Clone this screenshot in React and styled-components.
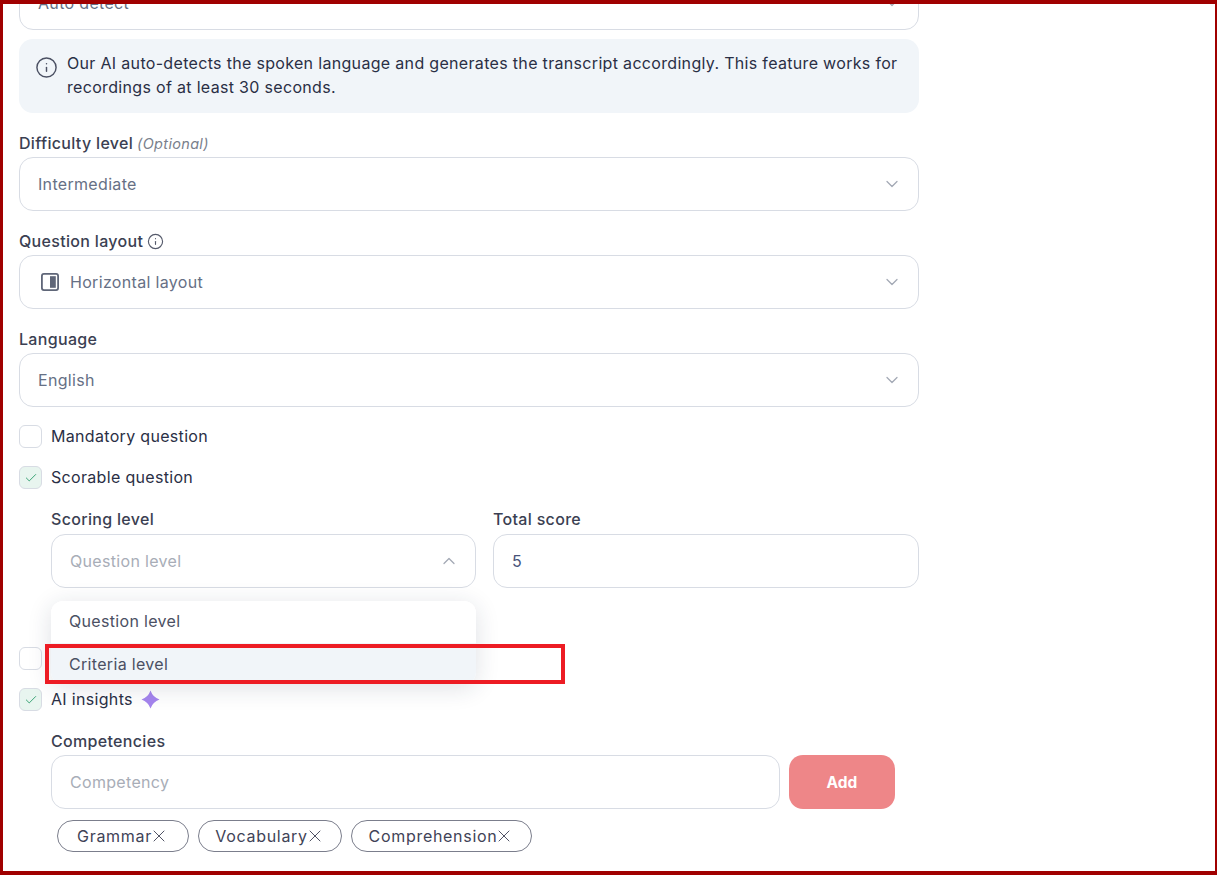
import React from "react";
import styled, { createGlobalStyle } from "styled-components";
import { Check, ChevronDown, ChevronUp, Info, X } from "lucide-react";

const GlobalStyle = createGlobalStyle`
  html, body {
    margin: 0;
    padding: 0;
    background: #fff;
  }
  * {
    box-sizing: border-box;
  }
`;

const Frame = styled.div`
  width: 1217px;
  height: 875px;
  overflow: hidden;
  border-style: solid;
  border-color: #a00000;
  border-width: 4px 2px 4px 3px;
  background: #fff;
  font-family: Inter, "Open Sans", sans-serif;
  font-size: 16px;
  letter-spacing: 0.32px;
  color: #2a2f45;
`;

const Form = styled.div`
  width: 900px;
  margin-top: -28px;
  margin-left: 16px;
  display: flex;
  flex-direction: column;
  gap: 18px;
`;

const Field = styled.div`
  display: flex;
  flex-direction: column;
  flex: ${(p) => (p.$grow ? 1 : "none")};
  position: relative;
`;

const Label = styled.div`
  display: flex;
  align-items: center;
  gap: 4px;
  height: 24px;
  margin-bottom: ${(p) => p.$gap || 2}px;
  color: #3b3f52;
  font-weight: 500;
  svg {
    color: #555a6b;
  }
`;

const Optional = styled.span`
  font-style: italic;
  font-weight: 400;
  font-size: 14.5px;
  color: #7a7f8c;
`;

const Select = styled.div`
  height: 54px;
  display: flex;
  align-items: center;
  gap: 10px;
  padding: 0 18px;
  border: 1px solid #d8dce4;
  border-radius: 14px;
  background: #fff;
  color: ${(p) => (p.$placeholder ? "#a8adb7" : p.$value ? "#47547a" : "#667085")};
  svg.chevron {
    margin-left: auto;
    margin-right: -2px;
    color: #a3a9b5;
  }
`;

const LayoutIcon = styled.svg`
  width: 18px;
  height: 18px;
  margin-left: 3px;
  margin-right: 1px;
  flex: none;
`;

const InfoBox = styled.div`
  display: flex;
  gap: 9px;
  margin-top: -9px;
  padding: 12px 18px 14px 16px;
  border-radius: 14px;
  background: #f1f5f9;
  line-height: 24px;
  svg {
    flex: none;
    margin-top: 5px;
    color: #4b5063;
  }
`;

const CheckRow = styled.div`
  display: flex;
  align-items: center;
  gap: 9px;
  height: 23px;
`;

const CheckText = styled.span`
  margin-top: -2px;
`;

const Box = styled.span`
  width: 23px;
  height: 23px;
  flex: none;
  display: flex;
  align-items: center;
  justify-content: center;
  border: 1px solid #d8dce4;
  border-radius: 6px;
  background: ${(p) => (p.$checked ? "#e8f5ef" : "#fff")};
  color: #2f9e6e;
`;

const Nested = styled.div`
  margin-left: 32px;
`;

const Pair = styled.div`
  display: grid;
  grid-template-columns: 425px 426px;
  gap: 17px;
  margin-bottom: 41px;
`;

const Dropdown = styled.div`
  position: absolute;
  z-index: 2;
  top: 94px;
  left: 0;
  right: 0;
  border-radius: 12px;
  background: #fff;
  box-shadow: 0 4px 24px rgba(30, 40, 70, 0.14);
`;

const Option = styled.div`
  position: relative;
  height: ${(p) => (p.$active ? 41 : 42)}px;
  display: flex;
  align-items: center;
  padding: ${(p) => (p.$active ? "1px 18px 0" : "0 18px 2px")};
  color: #4b5063;
  border-radius: ${(p) => (p.$active ? "0 0 12px 12px" : "12px 12px 0 0")};
  background: ${(p) => (p.$active ? "#f1f5f9" : "#fff")};
`;

const Callout = styled.div`
  position: absolute;
  top: 1px;
  left: -6px;
  width: 520px;
  height: 40px;
  border: 4px solid #ed1c24;
`;

const Sparkle = styled.svg`
  width: 19px;
  height: 19px;
  margin-left: -1px;
`;

const InputRow = styled.div`
  display: flex;
  gap: 9px;
  width: 844px;
`;

const AddButton = styled.button`
  width: 106px;
  height: 54px;
  border: none;
  border-radius: 14px;
  background: #ee8688;
  color: #fff;
  font-family: inherit;
  font-size: 15.5px;
  font-weight: 700;
`;

const Chips = styled.div`
  display: flex;
  gap: 9px;
  margin: 11px 0 0 6px;
`;

const Chip = styled.span`
  width: ${(p) => p.$width}px;
  height: 32px;
  display: flex;
  align-items: center;
  justify-content: center;
  border: 1px solid #7b7e8c;
  border-radius: 16px;
  letter-spacing: 0.7px;
  color: #3f4357;
  svg {
    margin-left: -3px;
  }
`;

const chips = [
  { name: "Grammar", width: 132 },
  { name: "Vocabulary", width: 144 },
  { name: "Comprehension", width: 181 },
];

const Chevron = ({ up }) =>
  up ? (
    <ChevronUp className="chevron" size={20} strokeWidth={1.5} />
  ) : (
    <ChevronDown className="chevron" size={20} strokeWidth={1.5} />
  );

const Tick = ({ checked }) => (
  <Box $checked={checked}>{checked && <Check size={14} strokeWidth={1.6} />}</Box>
);

const App = () => {
  return (
    <Frame>
      <GlobalStyle />
      <Form>
        <Select>
          Auto detect
          <Chevron />
        </Select>

        <InfoBox>
          <Info size={23} strokeWidth={1.5} />
          <div>
            Our AI auto-detects the spoken language and generates the transcript accordingly. This
            feature works for recordings of at least 30 seconds.
          </div>
        </InfoBox>

        <Field>
          <Label>
            Difficulty level <Optional>(Optional)</Optional>
          </Label>
          <Select>
            Intermediate
            <Chevron />
          </Select>
        </Field>

        <Field>
          <Label>
            Question layout <Info size={17} strokeWidth={1.6} />
          </Label>
          <Select>
            <LayoutIcon viewBox="0 0 18 18">
              <rect x="0.9" y="0.9" width="16.2" height="16.2" rx="2" fill="none" stroke="#5f6678" strokeWidth="1.8" />
              <rect x="9" y="3.2" width="5.8" height="11.6" fill="#5f6678" />
            </LayoutIcon>
            Horizontal layout
            <Chevron />
          </Select>
        </Field>

        <Field>
          <Label>Language</Label>
          <Select>
            English
            <Chevron />
          </Select>
        </Field>

        <CheckRow>
          <Tick />
          <CheckText>Mandatory question</CheckText>
        </CheckRow>

        <CheckRow>
          <Tick checked />
          <CheckText>Scorable question</CheckText>
        </CheckRow>

        <Nested>
          <Pair>
            <Field>
              <Label $gap={3}>Scoring level</Label>
              <Select $placeholder>
                Question level
                <Chevron up />
              </Select>
              <Dropdown>
                <Option>Question level</Option>
                <Option $active>
                  Criteria level
                  <Callout />
                </Option>
              </Dropdown>
            </Field>
            <Field>
              <Label $gap={3}>Total score</Label>
              <Select $value>5</Select>
            </Field>
          </Pair>
        </Nested>

        <CheckRow>
          <Tick />
        </CheckRow>

        <CheckRow>
          <Tick checked />
          <CheckText>AI insights</CheckText>
          <Sparkle viewBox="0 0 19 19">
            <path
              d="M9.5 0.5Q11.8 7.2 18.5 9.5Q11.8 11.8 9.5 18.5Q7.2 11.8 0.5 9.5Q7.2 7.2 9.5 0.5Z"
              fill="#a585ee"
            />
          </Sparkle>
        </CheckRow>

        <Nested>
          <Label>Competencies</Label>
          <InputRow>
            <Field $grow>
              <Select $placeholder>Competency</Select>
            </Field>
            <AddButton>Add</AddButton>
          </InputRow>
          <Chips>
            {chips.map((chip) => (
              <Chip key={chip.name} $width={chip.width}>
                {chip.name}
                <X size={20} strokeWidth={1.1} />
              </Chip>
            ))}
          </Chips>
        </Nested>
      </Form>
    </Frame>
  );
};

export default App;
